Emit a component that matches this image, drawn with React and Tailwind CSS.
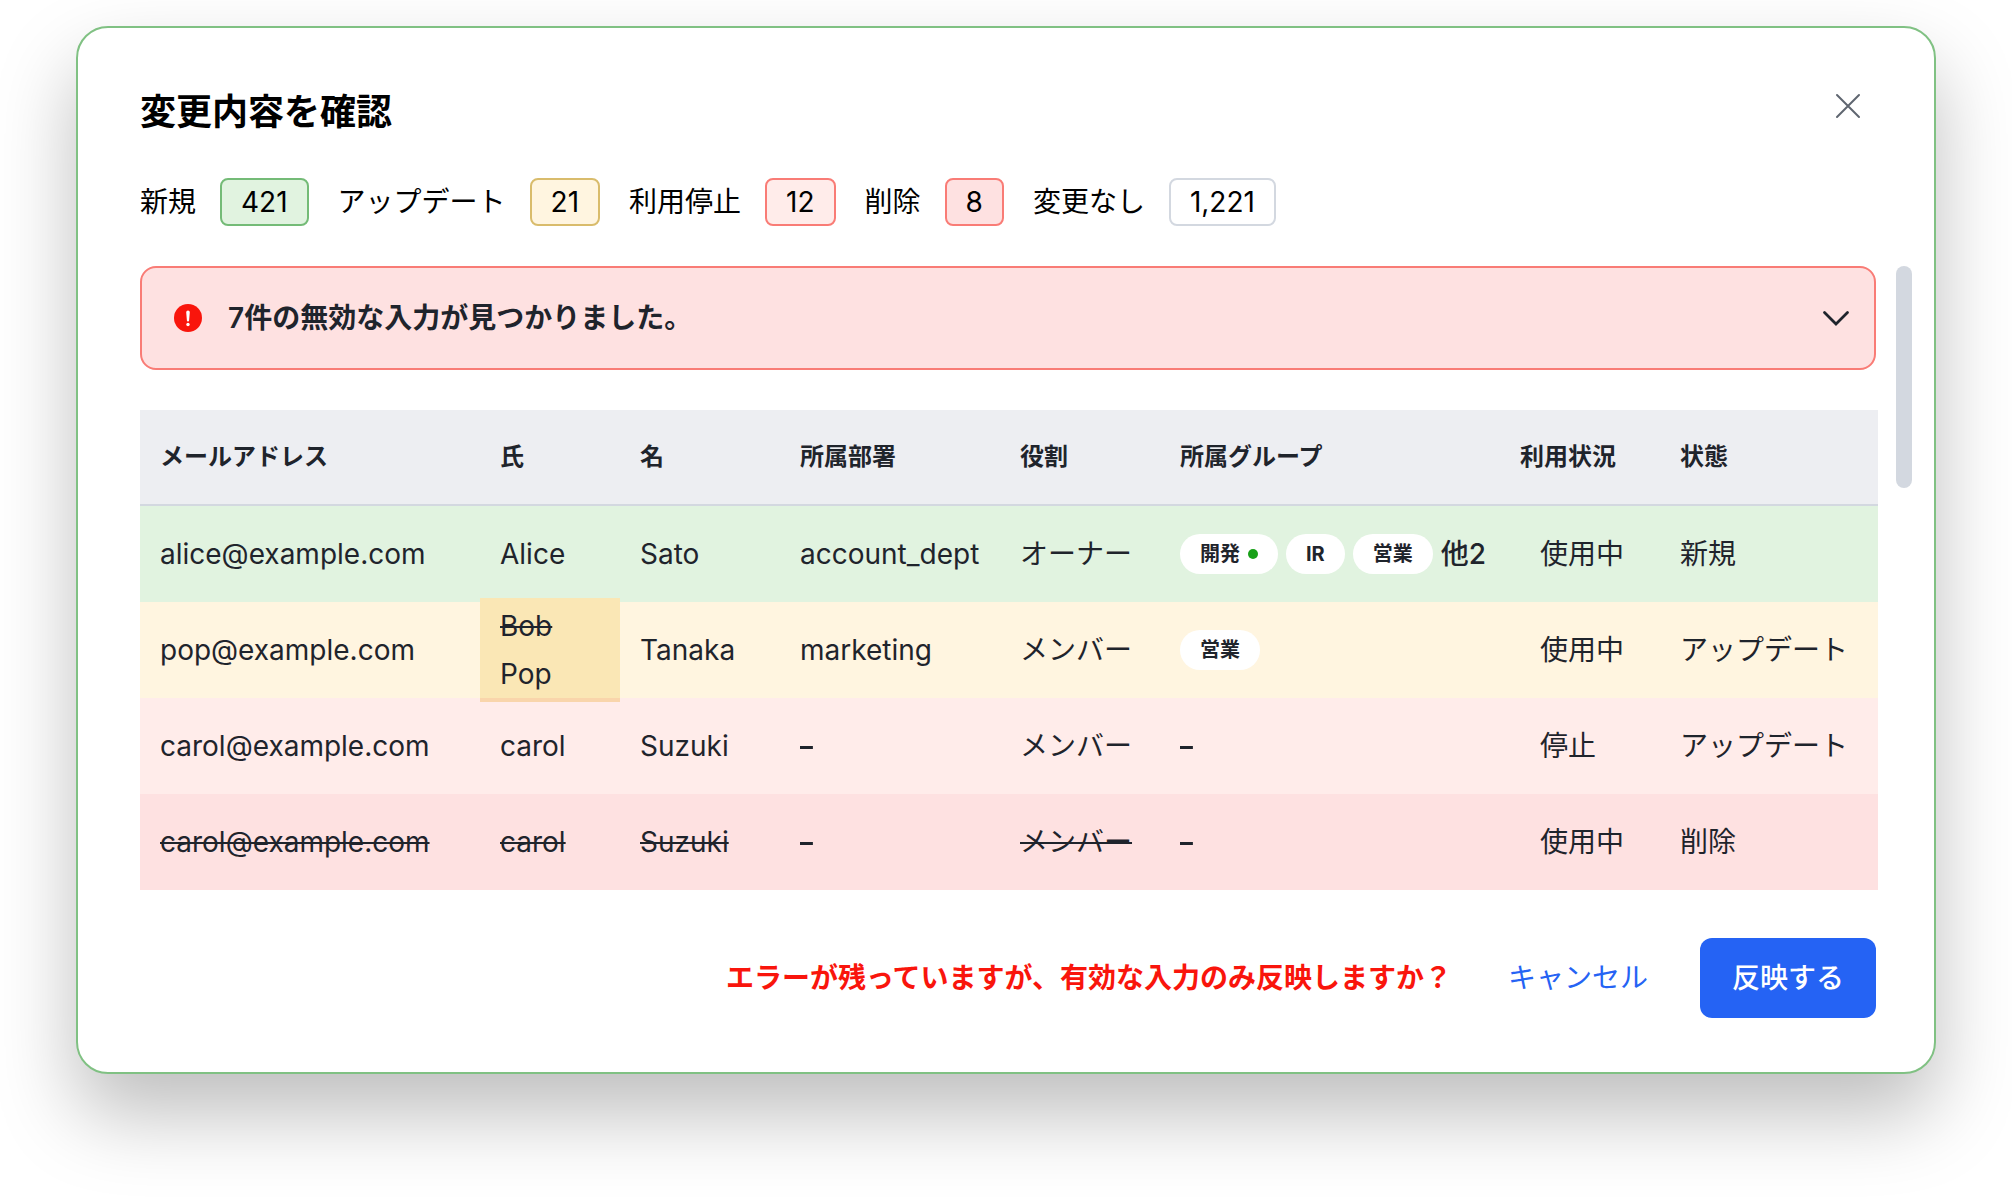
import React from 'react';

const SUMMARY = [
  { label: '新規', count: '421', color: 'border-[#74bb77] bg-[#e1f3e0]' },
  { label: 'アップデート', count: '21', color: 'border-[#d9bc6c] bg-[#fff5e0]' },
  { label: '利用停止', count: '12', color: 'border-[#f97c76] bg-[#ffecea]' },
  { label: '削除', count: '8', color: 'border-[#f97c76] bg-[#fee1e1]' },
  { label: '変更なし', count: '1,221', color: 'border-[#d3d8e0] bg-white' }
];

const COLUMNS = [
  { label: 'メールアドレス', width: 'w-auto' },
  { label: '氏', width: 'w-[140px]' },
  { label: '名', width: 'w-[160px]' },
  { label: '所属部署', width: 'w-[220px]' },
  { label: '役割', width: 'w-[160px]' },
  { label: '所属グループ', width: 'w-[340px]' },
  { label: '利用状況', width: 'w-[160px]' },
  { label: '状態', width: 'w-[218px]' }
];

const ROWS = [
  {
    id: 1,
    color: 'bg-[#e1f3e0]',
    email: 'alice@example.com',
    lastName: 'Alice',
    firstName: 'Sato',
    department: 'account_dept',
    role: 'オーナー',
    groups: [{ name: '開発', online: true }, { name: 'IR' }, { name: '営業' }],
    more: '他2',
    usage: '使用中',
    status: '新規'
  },
  {
    id: 2,
    color: 'bg-[#fff5e0]',
    email: 'pop@example.com',
    lastName: 'Pop',
    prevLastName: 'Bob',
    firstName: 'Tanaka',
    department: 'marketing',
    role: 'メンバー',
    groups: [{ name: '営業' }],
    usage: '使用中',
    status: 'アップデート'
  },
  {
    id: 3,
    color: 'bg-[#ffecea]',
    email: 'carol@example.com',
    lastName: 'carol',
    firstName: 'Suzuki',
    role: 'メンバー',
    usage: '停止',
    status: 'アップデート'
  },
  {
    id: 4,
    color: 'bg-[#fee1e1]',
    email: 'carol@example.com',
    lastName: 'carol',
    firstName: 'Suzuki',
    role: 'メンバー',
    usage: '使用中',
    status: '削除',
    deleted: true
  }
];

function CloseIcon() {
  return (
    <svg className="size-8" viewBox="0 0 32 32" fill="none" stroke="currentColor" strokeWidth="2" strokeLinecap="round" aria-hidden="true">
      <path d="M5 5l22 22M27 5L5 27" />
    </svg>
  );
}

function AlertIcon() {
  return (
    <svg className="size-7 shrink-0" viewBox="0 0 28 28" aria-hidden="true">
      <circle cx="14" cy="14" r="14" fill="#f9150c" />
      <path d="M12.2 8.3a1.8 1.800 0 0 1 3.600 0l-.7 8.200a1.100 1.100 0 0 1-2.200 0z" fill="#fff" />
      <circle cx="14" cy="20.500" r="1.700" fill="#fff" />
    </svg>
  );
}

function ChevronIcon() {
  return (
    <svg className="size-8 shrink-0" viewBox="0 0 32 32" fill="none" stroke="currentColor" strokeWidth="2.8" strokeLinecap="round" aria-hidden="true">
      <path d="M4.500 10.500L16 22l11.500-11.500" />
    </svg>
  );
}

function SummaryItem({ label, count, color }) {
  return (
    <div className="flex items-center gap-6">
      <dt>{label}</dt>
      <dd className={`flex h-12 items-center rounded-lg border-2 px-[19px] ${color}`}>{count}</dd>
    </div>
  );
}

function GroupTag({ name, online }) {
  return (
    <span className="flex h-10 items-center gap-2 rounded-full bg-white px-5 text-[20px] font-bold">
      {name}
      {online && <span className="size-2.5 rounded-full bg-[#18a018]" />}
    </span>
  );
}

function EmptyValue() {
  return <del className="decoration-[3px]">-</del>;
}

function NameCell({ value, prev, strike }) {
  if (!prev) {
    return <td className={`px-5 ${strike}`}>{value}</td>;
  }

  // the changed cell is slightly taller than its row
  return (
    <td className="relative px-5">
      <div className="absolute inset-x-0 -inset-y-1 flex flex-col border-b-4 border-[#f9d5ab] bg-[#fae7b5] px-5 pt-1 leading-[48px]">
        <del>{prev}</del>
        <ins className="no-underline">{value}</ins>
      </div>
    </td>
  );
}

function UserRow({ row }) {
  const strike = row.deleted ? 'line-through' : '';

  return (
    <tr className={`h-24 ${row.color}`}>
      <td className={`px-5 ${strike}`}>{row.email}</td>
      <NameCell value={row.lastName} prev={row.prevLastName} strike={strike} />
      <td className={`px-5 ${strike}`}>{row.firstName}</td>
      <td className="px-5">{row.department || <EmptyValue />}</td>
      <td className={`px-5 ${strike}`}>{row.role}</td>
      <td className="px-5">
        {row.groups ? (
          <div className="flex items-center gap-2">
            {row.groups.map((group) => (
              <GroupTag key={group.name} {...group} />
            ))}
            {row.more && <span className="font-medium">{row.more}</span>}
          </div>
        ) : (
          <EmptyValue />
        )}
      </td>
      <td className="pl-10">{row.usage}</td>
      <td className="px-5">{row.status}</td>
    </tr>
  );
}

export default function App() {
  return (
    <main lang="ja" className="min-h-screen bg-white px-[76px] pt-[26px] pb-[126px] font-['Inter','Noto_Sans_CJK_JP',sans-serif] text-[28px] leading-[40px] text-[#1f242c]">
      <section
        role="dialog"
        aria-labelledby="dialog-title"
        className="rounded-[32px] border-2 border-[#80c183] bg-white pt-[54px] pb-[54px] shadow-[0_40px_80px_rgba(0,0,0,0.26)]"
      >
        <header className="flex items-start justify-between px-[62px]">
          <h1 id="dialog-title" className="text-[36px] leading-[60px] font-bold text-black">変更内容を確認</h1>
          <button type="button" aria-label="閉じる" className="flex size-12 items-center justify-center text-[#5f6670]">
            <CloseIcon />
          </button>
        </header>

        <dl className="mt-9 flex flex-wrap gap-x-[29px] gap-y-4 px-[62px] text-black">
          {SUMMARY.map((item) => (
            <SummaryItem key={item.label} {...item} />
          ))}
        </dl>

        <div className="mt-10 flex items-start gap-[18px] pr-[22px] pl-[62px]">
          <div className="min-w-0 flex-1">
            <div className="pr-0.5">
              <button
                type="button"
                aria-expanded="false"
                className="flex h-[104px] w-full items-center gap-[26px] rounded-2xl border-2 border-[#f97c76] bg-[#fee1e1] pr-[22px] pl-8 text-left font-semibold"
              >
                <AlertIcon />
                <span className="flex-1">7件の無効な入力が見つかりました。</span>
                <ChevronIcon />
              </button>
            </div>

            <table className="mt-10 w-full table-fixed border-separate border-spacing-0 text-left whitespace-nowrap">
              <thead className="bg-[#edeef2] text-[24px]">
                <tr className="h-24">
                  {COLUMNS.map((column) => (
                    <th key={column.label} scope="col" className={`border-b-2 border-[#d3d8e0] px-5 font-bold ${column.width}`}>
                      {column.label}
                    </th>
                  ))}
                </tr>
              </thead>
              <tbody>
                {ROWS.map((row) => (
                  <UserRow key={row.id} row={row} />
                ))}
              </tbody>
            </table>
          </div>
          <div className="h-[222px] w-4 rounded-full bg-[#d3d8e0]" />
        </div>

        <footer className="mt-12 flex items-center justify-end gap-6 pr-[58px] pl-[62px]">
          <p className="font-bold text-[#f9150c]">エラーが残っていますが、有効な入力のみ反映しますか？</p>
          <div className="flex gap-5">
            <button type="button" className="h-20 px-8 text-[#2563f4]">キャンセル</button>
            <button type="button" className="h-20 rounded-xl bg-[#2563f4] px-8 font-medium text-white">反映する</button>
          </div>
        </footer>
      </section>
    </main>
  );
}
